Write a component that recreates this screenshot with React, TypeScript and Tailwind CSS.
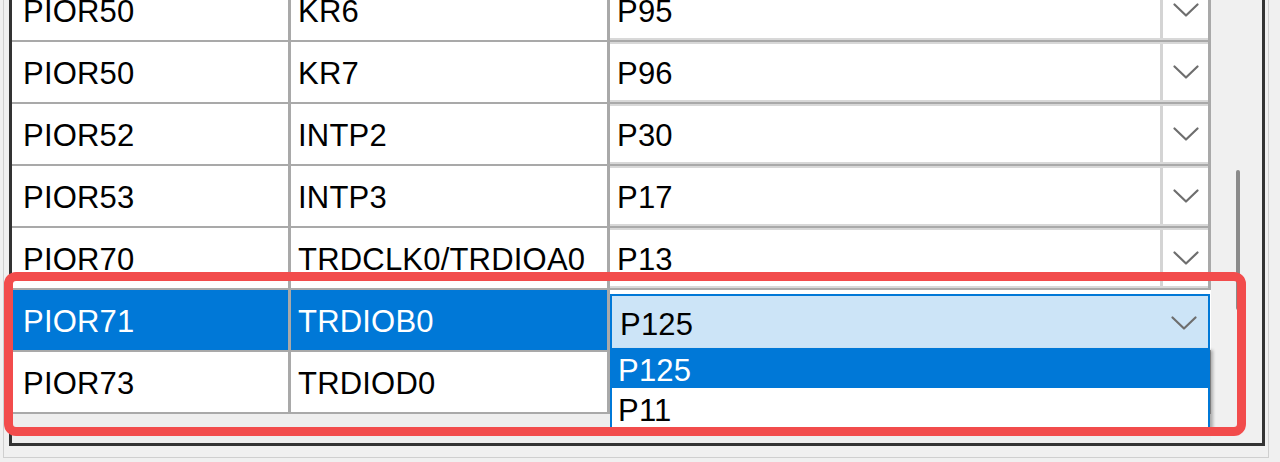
import React from "react";

type Row = { reg: string; fn: string; pin: string; selected?: boolean };

// The PIOR73 pin cell sits under the open list, so it carries no text.
const rows: Row[] = [
  { reg: "PIOR50", fn: "KR6", pin: "P95" },
  { reg: "PIOR50", fn: "KR7", pin: "P96" },
  { reg: "PIOR52", fn: "INTP2", pin: "P30" },
  { reg: "PIOR53", fn: "INTP3", pin: "P17" },
  { reg: "PIOR70", fn: "TRDCLK0/TRDIOA0", pin: "P13" },
  { reg: "PIOR71", fn: "TRDIOB0", pin: "P125", selected: true },
  { reg: "PIOR73", fn: "TRDIOD0", pin: "" },
];

function Chevron() {
  return (
    <svg width="26" height="14" viewBox="0 0 26 14" fill="none">
      <polyline
        points="1.5,1.5 13,12.5 24.5,1.5"
        stroke="#6e6e6e"
        strokeWidth="2.2"
        strokeLinecap="round"
        strokeLinejoin="round"
      />
    </svg>
  );
}

function ComboCell({ value }: { value: string }) {
  return (
    <div className="flex w-[601px] bg-white border-r-[3px] border-r-[#a9a9a9]">
      <div className="flex flex-1 border-y-2 border-[#d8d8d8]">
        <div className="flex flex-1 items-center pl-[7px] pt-[3px] whitespace-nowrap">{value}</div>
        <div className="flex w-[48px] items-center justify-center border-l-[3px] border-[#d4d4d4]">
          <Chevron />
        </div>
      </div>
    </div>
  );
}

function EditingCombo({ value }: { value: string }) {
  return (
    <div className="relative w-[601px] bg-white pt-[4px] pr-[1px]">
      <div className="flex h-[56px] border-2 border-b-0 border-[#0078d7] bg-[#cce4f7]">
        <div className="flex flex-1 items-center pl-[8px] pt-[3px]">{value}</div>
        <div className="flex w-[48px] items-center justify-center">
          <Chevron />
        </div>
      </div>
      {/* open drop-down list of the editing cell */}
      <div className="absolute left-0 top-[58px] z-10 w-[600px] border-x-2 border-[#0078d7] bg-white shadow-[3px_2px_3px_rgba(0,0,0,0.28)]">
        <div className="flex h-[40px] items-center bg-[#0078d7] pl-[6px] pt-[5px] text-white">P125</div>
        <div className="flex h-[40px] items-center pl-[6px] pt-[4px]">P11</div>
      </div>
    </div>
  );
}

function GridRow({ row }: { row: Row }) {
  const sel = row.selected;
  return (
    <div className="flex h-[62px] border-b-2 border-[#a9a9a9]">
      <div
        className={`flex w-[279px] items-center border-r-[3px] border-[#a9a9a9] pl-[11px] pt-[3px] ${
          sel ? "bg-[#0078d7] text-white" : "bg-white"
        }`}
      >
        {row.reg}
      </div>
      <div
        className={`flex w-[319px] items-center overflow-hidden whitespace-nowrap border-r-[3px] border-[#a9a9a9] pl-[7px] pt-[3px] ${
          sel ? "bg-[#0078d7] text-white" : "bg-white"
        }`}
      >
        {row.fn}
      </div>
      {sel ? <EditingCombo value={row.pin} /> : <ComboCell value={row.pin} />}
    </div>
  );
}

export default function App() {
  return (
    <div className="relative h-[462px] w-[1280px] overflow-hidden bg-[#f0f0f0] font-['Liberation_Sans',Arial,sans-serif] text-[31px] leading-none tracking-[0.2px] text-black">
      <div className="mt-[-20px] ml-[3px] w-[1266px] border-x border-b border-[#cfcfcf] pl-[5px] pr-[3px] pb-[11px]">
        <div className="flex h-[466px] border-x-[3px] border-b-[3px] border-[#333333]">
          <div className="w-[1199px] bg-[#eeeeee]">
            {rows.map((r, i) => (
              <GridRow key={i} row={r} />
            ))}
          </div>
          <div className="flex-1 bg-[#f0f0f0] pt-[190px]">
            <div className="ml-[25px] h-[140px] w-[4px] rounded-full bg-[#8a8a8a]" />
          </div>
        </div>
      </div>
      {/* highlight frame around the edited rows */}
      <div className="pointer-events-none absolute left-[4px] top-[272px] z-20 h-[164px] w-[1242px] rounded-[12px] border-[9px] border-[#f24c4c]" />
    </div>
  );
}
